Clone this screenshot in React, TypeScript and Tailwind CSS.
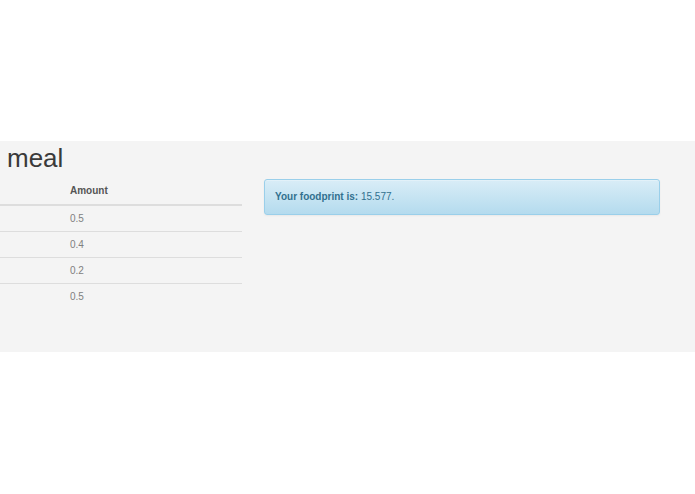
const rows = ["0.5", "0.4", "0.2", "0.5"];

export default function App() {
  return (
    <div className="min-h-[494px] bg-white pt-[141px] font-['Liberation_Sans',Arial,sans-serif]">
      <div className="flex h-[211px] items-start bg-[#f4f4f4] pt-[3px]">
        {/* left column: meal table */}
        <div className="w-[242px] shrink-0">
          <h1 className="pl-[7px] text-[26px] leading-[29px] text-[#3a3a3a]">meal</h1>
          <table className="mt-[5px] w-full border-collapse text-[10px]">
            <thead>
              <tr>
                <th className="w-[64px] border-b-2 border-[#dddddd] p-0" />
                <th className="border-b-2 border-[#dddddd] px-[6px] py-[6px] text-left font-bold leading-[14px] text-[#555]">
                  Amount
                </th>
              </tr>
            </thead>
            <tbody>
              {rows.map((v, i) => (
                <tr key={i}>
                  <td className={`${i > 0 ? "border-t border-[#dddddd]" : ""} p-0`} />
                  <td
                    className={`${i > 0 ? "border-t border-[#dddddd]" : ""} px-[6px] py-[6px] leading-[13px] text-[#808080]`}
                  >
                    {v}
                  </td>
                </tr>
              ))}
            </tbody>
          </table>
        </div>

        {/* right column: result */}
        <div className="ml-[22px] mt-[35px] w-[396px] shrink-0">
          <div className="rounded-[3px] border border-[#9acfea] bg-gradient-to-b from-[#d9edf7] to-[#b4dbee] px-[10px] py-[10px] text-[10px] leading-[14px] text-[#31708f] shadow-[inset_0_1px_0_rgba(255,255,255,0.25),0_1px_2px_rgba(0,0,0,0.05)]">
            <span className="font-bold">Your foodprint is:</span> 15.577.
          </div>
        </div>
      </div>
    </div>
  );
}
